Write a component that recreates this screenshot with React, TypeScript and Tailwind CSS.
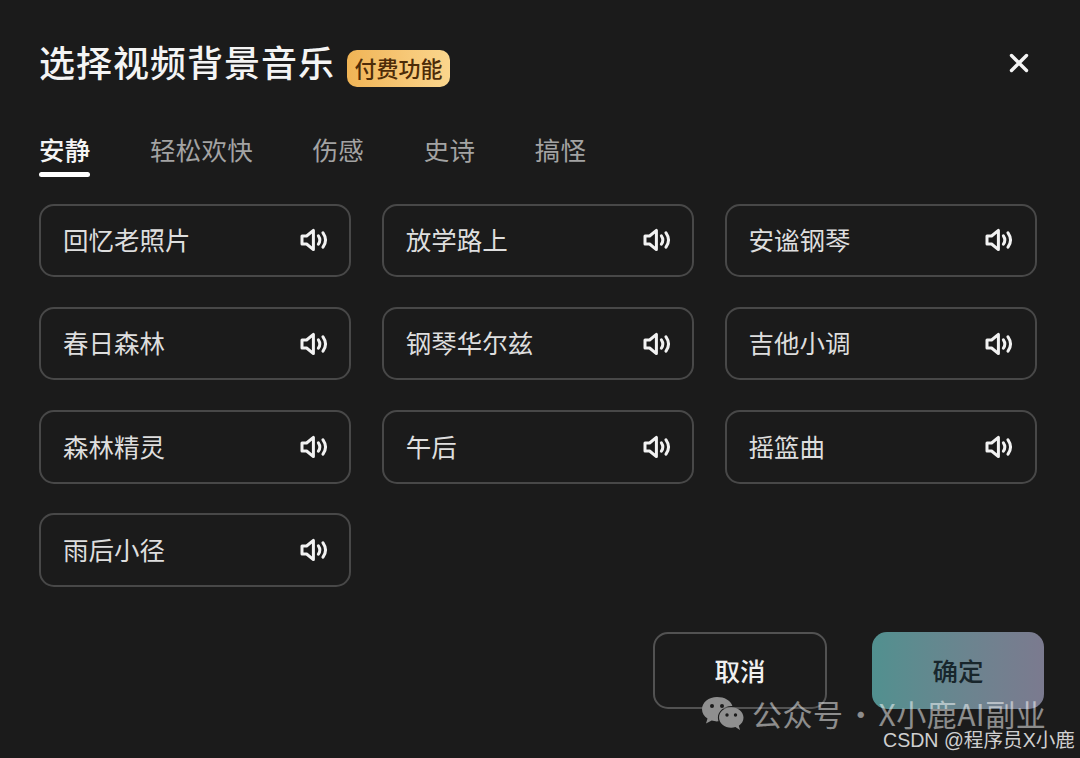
const FONT = "font-['Noto_Sans_CJK_SC','Noto_Sans',sans-serif]";

const tabs = ["安静", "轻松欢快", "伤感", "史诗", "搞怪"];
const tracks = [
  "回忆老照片",
  "放学路上",
  "安谧钢琴",
  "春日森林",
  "钢琴华尔兹",
  "吉他小调",
  "森林精灵",
  "午后",
  "摇篮曲",
  "雨后小径",
];

function SpeakerIcon() {
  return (
    <svg width="28" height="26" viewBox="0 0 28 26" fill="none" stroke="#f2f2f2" strokeWidth="3" strokeLinejoin="round" strokeLinecap="round">
      <path d="M2 9h4.600L13.400 3.400v19.200L6.600 17H2z" />
      <path d="M18.400 8.800c1.700 2.500 1.700 5.900 0 8.400" />
      <path d="M23 5.800c3.100 4.400 3.100 10 0 14.400" />
    </svg>
  );
}

function WechatIcon() {
  return (
    <svg width="42" height="34" viewBox="0 0 42 34" className="shrink-0">
      <path d="M15 0C6.800 0 0 5.400 0 12.200c0 3.800 2.100 7.100 5.500 9.400L4 26.600l5.700-3c1.700.5 3.400.8 5.300.8.500 0 1 0 1.500-.1-.4-1.200-.6-2.400-.6-3.700 0-6.500 6-11.700 13.500-11.700h1C28.800 3.400 22.400 0 15 0z" fill="#8f8f8f" />
      <path d="M41.500 20.500c0-5.600-5.600-10.200-12.300-10.200S17 14.900 17 20.500s5.500 10.200 12.200 10.200c1.500 0 2.900-.2 4.200-.6l4.600 2.900-1.200-4.300c2.900-1.900 4.700-4.800 4.700-8.200z" fill="#8f8f8f" />
      <circle cx="10" cy="9" r="2" fill="#1b1b1b" />
      <circle cx="20" cy="9" r="2" fill="#1b1b1b" />
      <circle cx="25" cy="18" r="1.700" fill="#1b1b1b" />
      <circle cx="33.500" cy="18" r="1.700" fill="#1b1b1b" />
    </svg>
  );
}

export default function App() {
  return (
    <div className={`relative h-[758px] w-[1080px] overflow-hidden bg-[#1b1b1b] pl-[39px] pr-[44px] pt-[35px] text-white ${FONT}`}>
      <div className="flex h-[52px] items-center">
        <h1 className="text-[36px] font-medium leading-[52px] tracking-[1px] text-[#f4f4f4]">选择视频背景音乐</h1>
        <span className="ml-[12px] mt-[15px] flex h-[37px] w-[103px] items-center justify-center rounded-[10px] bg-gradient-to-r from-[#f0b455] to-[#fbd68d] pb-[3px] text-[22px] font-medium text-[#4d2c08]">
          付费功能
        </span>
        <button className="ml-auto mr-[6px] mt-[4px] text-[#f4f4f4]">
          <svg width="22" height="22" viewBox="0 0 22 22" stroke="currentColor" strokeWidth="3.400" strokeLinecap="round">
            <path d="M3.500 3.500l15 15M18.500 3.500l-15 15" />
          </svg>
        </button>
      </div>

      <div className="mt-[44px] flex gap-[59.700px] text-[25.500px] leading-[36px] tracking-[0.2px]">
        {tabs.map((tab, i) => (
          <div key={tab} className="relative">
            <span className={i === 0 ? "font-medium text-[#f4f4f4]" : "text-[#a3a3a3]"}>{tab}</span>
            {i === 0 && <div className="mt-[5px] h-[5px] w-full rounded-full bg-white" />}
          </div>
        ))}
      </div>

      <div className="mt-[26.500px] grid grid-cols-[312.300px_312.300px_312.300px] gap-x-[30.500px] gap-y-[29.800px]">
        {tracks.map((name) => (
          <div key={name} className="flex h-[73.500px] items-center justify-between rounded-[15px] border-2 border-[#484848] pl-[22px] pr-[21.500px]">
            <span className="mb-[2px] text-[25.500px] text-[#dedede]">{name}</span>
            <SpeakerIcon />
          </div>
        ))}
      </div>

      <div className="-mr-[8px] mt-[45.500px] flex justify-end gap-[45px]">
        <button className="h-[77px] w-[174px] rounded-[15px] border-2 border-[#525252] pb-[2px] text-[25.500px] font-medium text-[#f0f0f0]">取消</button>
        <button className="h-[77px] w-[172px] rounded-[15px] bg-gradient-to-r from-[#51908f] to-[#7b7a8f] pb-[2px] text-[25.500px] font-medium text-[#18262c]">确定</button>
      </div>

      <div className="absolute left-[702px] top-[697px] flex h-[33px] items-center">
        <WechatIcon />
        <span className="ml-[8px] mb-[2px] whitespace-nowrap text-[30px] leading-[32px] tracking-[0.5px] text-white/50 [word-spacing:-5px]">公众号 · X小鹿AI副业</span>
      </div>
      <div className="absolute left-[883px] top-[729px] whitespace-nowrap font-['Liberation_Sans','Noto_Sans_CJK_SC',sans-serif] text-[19.600px] leading-[22px] text-[#cfcfcf]">CSDN @程序员X小鹿</div>
    </div>
  );
}
